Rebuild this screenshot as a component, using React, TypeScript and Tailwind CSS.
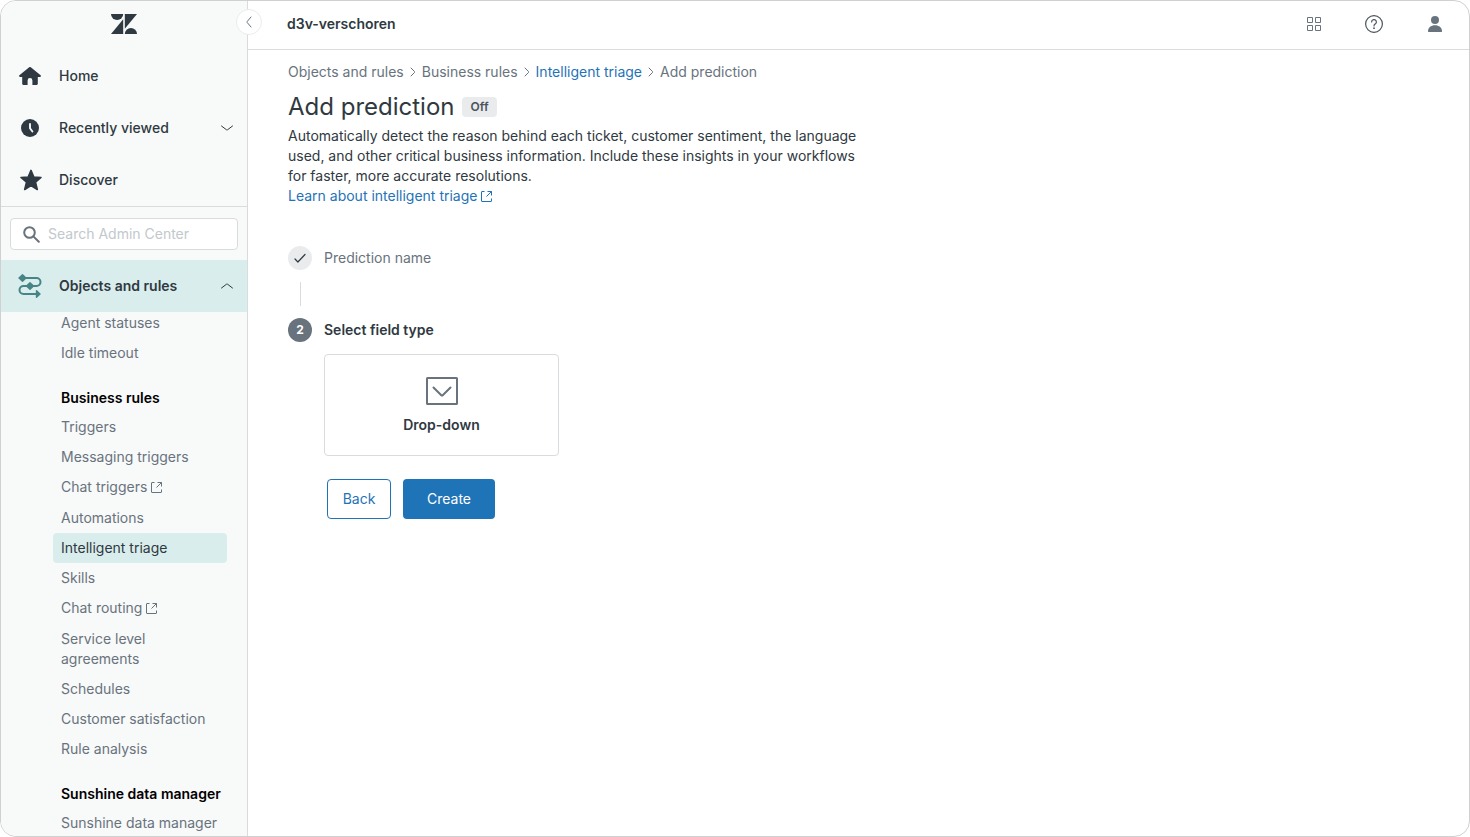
import React, { useState } from 'react';
import clsx from 'clsx';

interface NavItem {
  label: string;
  external?: boolean;
}

interface NavGroup {
  title?: string;
  items: NavItem[];
}

const navGroups: NavGroup[] = [
  { items: [{ label: 'Agent statuses' }, { label: 'Idle timeout' }] },
  {
    title: 'Business rules',
    items: [
      { label: 'Triggers' },
      { label: 'Messaging triggers' },
      { label: 'Chat triggers', external: true },
      { label: 'Automations' },
      { label: 'Intelligent triage' },
      { label: 'Skills' },
      { label: 'Chat routing', external: true },
      { label: 'Service level agreements' },
      { label: 'Schedules' },
      { label: 'Customer satisfaction' },
      { label: 'Rule analysis' }
    ]
  },
  { title: 'Sunshine data manager', items: [{ label: 'Sunshine data manager' }] }
];

const crumbs = [
  { label: 'Objects and rules' },
  { label: 'Business rules' },
  { label: 'Intelligent triage', link: true },
  { label: 'Add prediction' }
];

function Logo() {
  return (
    <svg width="26" height="20" viewBox="0 0 26 20" fill="currentColor" aria-hidden="true">
      <path d="M12.200 5.200V20H0z" />
      <path d="M12.200 0a6.100 6.100 0 0 1-12.200 0z" />
      <path d="M13.800 20a6.100 6.100 0 0 1 12.200 0z" />
      <path d="M13.800 14.800V0H26z" />
    </svg>
  );
}

function HomeIcon() {
  return (
    <svg width="22" height="18" viewBox="0 0 22 18" fill="currentColor" aria-hidden="true">
      <path d="M10.2.3a1.3 1.3 0 0 1 1.6 0l9.8 8c.7.6.3 1.7-.6 1.7h-2.2v6.8c0 .7-.5 1.2-1.2 1.2h-4.2v-4.6a2.4 2.4 0 0 0-4.8 0V18H4.4c-.7 0-1.2-.5-1.2-1.2V10H1C.1 10-.3 8.900.4 8.300z" />
    </svg>
  );
}

function ClockIcon() {
  return (
    <svg width="18" height="18" viewBox="0 0 18 18" aria-hidden="true">
      <circle cx="9" cy="9" r="9" fill="currentColor" />
      <path d="M9 5v4.300l2.400 3.200" fill="none" stroke="#f8f9f9" strokeWidth="1.900" strokeLinecap="round" strokeLinejoin="round" />
    </svg>
  );
}

function StarIcon() {
  return (
    <svg width="22" height="22" viewBox="0 0 22 22" fill="currentColor" stroke="currentColor" strokeWidth="1.600" strokeLinejoin="round" aria-hidden="true">
      <path d="M11 1.400l2.800 6.600 7.200.5-5.500 4.700 1.800 7.300L11 16.600l-6.300 3.900 1.800-7.300L1 8.500l7.200-.5z" />
    </svg>
  );
}

function RulesIcon() {
  return (
    <svg width="24" height="24" viewBox="0 0 24 24" fill="none" stroke="currentColor" strokeWidth="2" aria-hidden="true">
      <path d="M4 4h14.500a4 4 0 0 1 0 8h-13a4 4 0 0 0 0 8H19" />
      <path d="M4.500.8L8 4 4.500 7.200 1 4zM12 8.800l3.500 3.200-3.500 3.200L8.500 12zM18.500 16.800L22 20l-3.500 3.200z" fill="currentColor" strokeWidth="1.400" strokeLinejoin="round" />
    </svg>
  );
}

function SearchIcon() {
  return (
    <svg width="17" height="17" viewBox="0 0 17 17" fill="none" stroke="currentColor" strokeWidth="2" strokeLinecap="round" className="shrink-0" aria-hidden="true">
      <circle cx="6.500" cy="6.500" r="5.300" />
      <path d="M10.600 10.600L15.800 15.800" />
    </svg>
  );
}

function Chevron({ d }: { d: string }) {
  return (
    <svg width="12" height="12" viewBox="0 0 12 12" fill="none" stroke="currentColor" strokeLinecap="round" aria-hidden="true">
      <path d={d} />
    </svg>
  );
}

function ExternalIcon() {
  return (
    <svg width="12" height="12" viewBox="0 0 12 12" fill="none" stroke="currentColor" className="mb-[2px] inline-block" aria-hidden="true">
      <path d="M3.500 1.500H1a.5.5 0 0 0-.5.5v9a.5.5 0 0 0 .5.5h9a.5.5 0 0 0 .5-.5V8.500M6.500 1.500h4v4M10.500 1.500l-5 5" />
    </svg>
  );
}

function GridIcon() {
  return (
    <svg width="16" height="16" viewBox="0 0 16 16" fill="none" stroke="currentColor" aria-hidden="true">
      <path d="M1.500 1.500h5v5h-5zM9.500 1.500h5v5h-5zM1.500 9.500h5v5h-5zM9.500 9.500h5v5h-5z" />
    </svg>
  );
}

function HelpIcon() {
  return (
    <svg width="18" height="18" viewBox="0 0 18 18" fill="none" stroke="currentColor" strokeWidth="1.200" aria-hidden="true">
      <circle cx="9" cy="9" r="8.400" />
      <path d="M6.600 7a2.400 2.400 0 1 1 3.500 2.100c-.7.400-1.100.8-1.100 1.600v.3" strokeLinecap="round" />
      <circle cx="9" cy="13.200" r=".9" fill="currentColor" stroke="none" />
    </svg>
  );
}

function UserIcon() {
  return (
    <svg width="14" height="16" viewBox="0 0 14 16" fill="currentColor" aria-hidden="true">
      <circle cx="7" cy="4" r="4" />
      <path d="M0 15.500C0 11.500 3 9.300 7 9.300s7 2.200 7 6.200c0 .3-.2.500-.5.500H.5c-.3 0-.5-.2-.5-.5z" />
    </svg>
  );
}

const topRow = 'flex h-[52px] w-full items-center pl-[18px] pr-[14px] text-left';

function Sidebar() {
  const [active, setActive] = useState('Intelligent triage');
  const [open, setOpen] = useState(true);

  return (
    <aside className="flex w-[247px] shrink-0 flex-col border-r border-[#d8dcde] bg-[#f8f9f9]">
      <div className="flex h-[49px] shrink-0 items-center justify-center pb-1">
        <Logo />
      </div>
      <nav className="flex min-h-0 flex-1 flex-col" aria-label="Admin Center">
        <div className="shrink-0 border-b border-[#d8dcde] font-medium">
          <a href="#home" className={topRow}>
            <span className="flex w-10"><HomeIcon /></span>
            Home
          </a>
          <button type="button" className={topRow}>
            <span className="flex w-10 pl-[2px]"><ClockIcon /></span>
            <span className="flex-1">Recently viewed</span>
            <Chevron d="M.5 4l5 3.800a.8.800 0 0 0 1 0l5-3.800" />
          </button>
          <a href="#discover" className={topRow}>
            <span className="flex w-10 pl-px"><StarIcon /></span>
            Discover
          </a>
        </div>
        <div className="shrink-0 px-[9px] pt-[11px] pb-[10px]">
          <label className="flex h-8 items-center gap-2 rounded border border-[#d8dcde] bg-white px-3 text-[#68737d]">
            <SearchIcon />
            <input
              type="search"
              aria-label="Search Admin Center"
              placeholder="Search Admin Center"
              className="w-full min-w-0 bg-transparent outline-none placeholder:text-[#c2c8cc]"
            />
          </label>
        </div>
        <button
          type="button"
          aria-expanded={open}
          onClick={() => setOpen(!open)}
          className="flex h-[52px] w-full shrink-0 items-center bg-[#daeded] pl-[17px] pr-[14px] text-left font-semibold"
        >
          <span className="flex w-[41px] text-[#468585]"><RulesIcon /></span>
          <span className="flex-1">Objects and rules</span>
          <Chevron d="M.5 8l5-3.800a.8.800 0 0 1 1 0l5 3.800" />
        </button>
        {open && (
          <div className="min-h-0 flex-1 overflow-hidden pr-5 pl-[52px]">
            <div className="-mt-1">
              {navGroups.map((group, i) => (
                <div key={i}>
                  {group.title && (
                    <h2 className="pt-5 pb-1 pl-2 font-semibold whitespace-nowrap text-black">{group.title}</h2>
                  )}
                  <ul>
                    {group.items.map((item) => (
                      <li key={item.label} className={clsx(item.external && 'pb-px')}>
                        <a
                          href="#rules"
                          onClick={() => setActive(item.label)}
                          className={clsx(
                            'block rounded py-[5px] pl-2',
                            active === item.label ? 'bg-[#daeded] text-[#2f3941]' : 'text-[#68737d]'
                          )}
                        >
                          {item.label} {item.external && <ExternalIcon />}
                        </a>
                      </li>
                    ))}
                  </ul>
                </div>
              ))}
            </div>
          </div>
        )}
      </nav>
    </aside>
  );
}

function TopBar() {
  return (
    <header className="relative flex h-[49px] shrink-0 items-center border-b border-[#d8dcde] pr-[27px] pb-[2px] pl-[39px]">
      <button
        type="button"
        aria-label="Collapse sidebar"
        className="absolute top-2 -left-3 flex size-[26px] items-center justify-center rounded-full border border-[#e9ebed] bg-white text-[#68737d]"
      >
        <Chevron d="M8 1L4.200 5.500a.8.800 0 0 0 0 1L8 11" />
      </button>
      <div className="flex-1 font-semibold">d3v-verschoren</div>
      <div className="flex items-center text-[#68737d]">
        <button type="button" aria-label="Products" className="mr-[43px]"><GridIcon /></button>
        <button type="button" aria-label="Help" className="mr-[45px] text-[#49545c]"><HelpIcon /></button>
        <button type="button" aria-label="Profile"><UserIcon /></button>
      </div>
    </header>
  );
}

function Steps() {
  return (
    <ol className="mt-10">
      <li>
        <div className="flex h-6 items-center gap-3 text-[#68737d]">
          <span className="flex size-6 items-center justify-center rounded-full bg-[#e9ebed] text-[#2f3941]">
            <svg width="12" height="12" viewBox="0 0 12 12" fill="none" stroke="currentColor" strokeWidth="1.200" strokeLinecap="round" strokeLinejoin="round" aria-hidden="true">
              <path d="M1 7l2.900 3L11 2.500" />
            </svg>
          </span>
          Prediction name
        </div>
        <div className="my-3 ml-3 h-6 w-px bg-[#d8dcde]" />
      </li>
      <li>
        <div className="flex h-6 items-center gap-3 font-semibold">
          <span className="flex size-6 items-center justify-center rounded-full bg-[#68737d] text-xs font-bold text-white">2</span>
          Select field type
        </div>
        <div className="mt-3 pl-9">
          <button
            type="button"
            className="flex h-[102px] w-[235px] flex-col items-center justify-center gap-[10px] rounded border border-[#d8dcde] pt-[2px] font-semibold"
          >
            <svg width="32" height="28" viewBox="0 0 32 28" fill="none" stroke="#68737d" strokeWidth="2" aria-hidden="true">
              <rect x="1" y="1" width="30" height="26" rx=".5" />
              <path d="M7.500 10.500l7.800 7.700a1 1 0 0 0 1.400 0l7.800-7.700" strokeLinecap="round" />
            </svg>
            Drop-down
          </button>
          <div className="mt-[23px] flex gap-3 pl-[3px]">
            <button type="button" className="h-10 w-16 rounded border border-[#1f73b7] text-[#1f73b7]">Back</button>
            <button type="button" className="h-10 w-[92px] rounded bg-[#1f73b7] text-white">Create</button>
          </div>
        </div>
      </li>
    </ol>
  );
}

export default function App() {
  return (
    <div className="h-screen bg-white font-[Inter,sans-serif] text-sm leading-5 text-[#2f3941]">
      <div className="flex h-full overflow-hidden rounded-2xl border border-[#d0d0d0]">
        <Sidebar />
        <div className="flex min-w-0 flex-1 flex-col">
          <TopBar />
          <main className="px-10 pt-3">
            <nav aria-label="Breadcrumb">
              <ol className="flex items-center text-[#68737d]">
                {crumbs.map((crumb, i) => (
                  <li key={crumb.label} className="flex items-center">
                    {i > 0 && (
                      <span className="mx-[3px]"><Chevron d="M4 2l3.600 3.600a.6.600 0 0 1 0 .8L4 10" /></span>
                    )}
                    {crumb.link ? <a href="#triage" className="text-[#1f73b7]">{crumb.label}</a> : crumb.label}
                  </li>
                ))}
              </ol>
            </nav>
            <div className="mt-[7px] mb-px flex items-center gap-2">
              <h1 className="text-2xl leading-9">Add prediction</h1>
              <span className="rounded-sm bg-[#e9ebed] px-2 text-xs leading-5 font-semibold text-[#49545c]">Off</span>
            </div>
            <p className="max-w-[570px]">
              Automatically detect the reason behind each ticket, customer sentiment, the language used, and other
              critical business information. Include these insights in your workflows for faster, more accurate
              resolutions.
            </p>
            <a href="#learn" className="inline-block text-[#1f73b7]">
              Learn about intelligent triage <ExternalIcon />
            </a>
            <Steps />
          </main>
        </div>
      </div>
    </div>
  );
}
